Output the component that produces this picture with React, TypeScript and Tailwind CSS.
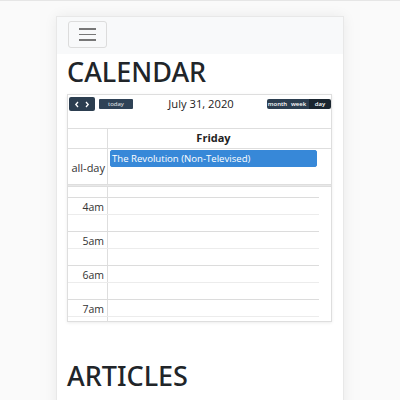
import React from 'react';

const font = { fontFamily: "'Open Sans', 'Noto Sans', sans-serif" };
const headingFont = { fontFamily: "'Noto Sans', 'Open Sans', sans-serif" };

// half-hour slots of the day view, starting just above 4am
const slots = [
  { label: '', major: false },
  { label: '4am', major: true },
  { label: '', major: false },
  { label: '5am', major: true },
  { label: '', major: false },
  { label: '6am', major: true },
  { label: '', major: false },
  { label: '7am', major: true },
  { label: '', major: false },
];

const ViewButton = ({ label, active }: { label: string; active?: boolean }) => (
  <div
    className={`h-full flex items-center justify-center text-[6px] font-semibold text-white leading-none ${
      active ? 'bg-[#1a252f] w-[22px]' : 'bg-[#2c3e50] w-[21px]'
    }`}
  >
    {label}
  </div>
);

const Toolbar = () => (
  <div className="flex items-center h-[14px] pl-[1px]">
    <div className="flex h-[14px] w-[26px] bg-[#2c3e50] rounded-[2px] items-center justify-around px-[3px]">
      <svg width="6" height="7" viewBox="0 0 6 7">
        <path d="M4 1 L1.8 3.5 L4 6" stroke="white" strokeWidth="1.3" fill="none" />
      </svg>
      <svg width="6" height="7" viewBox="0 0 6 7">
        <path d="M2 1 L4.2 3.5 L2 6" stroke="white" strokeWidth="1.3" fill="none" />
      </svg>
    </div>
    <div className="ml-[4px] h-[10px] w-[34px] bg-[#2f4256] rounded-[1px] flex items-center justify-center text-[6px] text-white/90 leading-none">
      today
    </div>
    <div className="flex-1 text-center text-[11.2px] text-[#222] leading-none pl-[2px]">July 31, 2020</div>
    <div className="flex h-[10px] rounded-[2px] overflow-hidden">
      <ViewButton label="month" />
      <ViewButton label="week" />
      <ViewButton label="day" active />
    </div>
  </div>
);

const Calendar = () => (
  <div className="border border-[#dedede] shadow-[0_1px_3px_rgba(0,0,0,0.08)] bg-white">
    <div className="pt-[2px]">
      <Toolbar />
    </div>
    <div className="mt-[17px] border-t border-[#dedede]">
      {/* header */}
      <div className="flex h-[20px] border-b border-[#dedede]">
        <div className="w-[40px] border-r border-[#dedede]" />
        <div className="flex-1 flex items-center justify-center text-[11px] font-bold text-[#222]">Friday</div>
        <div className="w-[12px]" />
      </div>
      {/* all-day row */}
      <div className="flex h-[35px]">
        <div className="w-[40px] border-r border-[#dedede] flex items-center justify-end pr-[2px] pt-[4px] text-[11px] text-[#333]">
          all-day
        </div>
        <div className="flex-1 pt-[1px] px-[2px]">
          <div className="h-[17px] bg-[#3788d8] border border-[#3788d8] rounded-[2px] text-white text-[9.6px] leading-[15px] px-[1px] whitespace-nowrap overflow-hidden">
            The Revolution (Non-Televised)
          </div>
        </div>
        <div className="w-[12px]" />
      </div>
      <div className="h-[3px] bg-[#e8e8e8] border-y border-[#dedede]" />
      {/* time grid */}
      <div className="h-[134px] overflow-hidden flex">
        <div className="flex-1 mt-[-6px]">
          {slots.map((s, i) => (
            <div key={i} className={`flex h-[17px] border-b ${i % 2 === 0 ? 'border-[#dcdcdc]' : 'border-[#ececec]'}`}>
              <div className="w-[40px] border-r border-[#dedede] flex items-center justify-end pr-[3px] pt-[3px] text-[10.5px] text-[#333]">
                {s.label}
              </div>
              <div className="flex-1" />
            </div>
          ))}
        </div>
        <div className="w-[12px] bg-white" />
      </div>
    </div>
  </div>
);

const App = () => (
  <div className="min-h-screen bg-[#fafafa] border-t border-[#e6e6e6] pt-[15px]" style={font}>
    <div className="w-[288px] mx-auto bg-white border border-[#e8e8e8] shadow-[0_0_12px_rgba(0,0,0,0.07)]">
      <nav className="bg-[#f8f9fa] h-[37px] pl-[11px] pt-[4px]">
        <button className="w-[39px] h-[27px] border border-[#dcdcdc] rounded-[3px] flex flex-col items-center justify-center gap-[4px]">
          <span className="block w-[17px] h-[1.5px] bg-[#777]" />
          <span className="block w-[17px] h-[1.5px] bg-[#777]" />
          <span className="block w-[17px] h-[1.5px] bg-[#777]" />
        </button>
      </nav>
      <div className="pl-[10px] pr-[11px]">
        <h1 className="text-[27px] font-medium text-[#212529] leading-[32px] mt-[2px] mb-[6px]" style={headingFont}>
          CALENDAR
        </h1>
        <Calendar />
        <h1 className="text-[27px] font-medium text-[#212529] leading-[32px] mt-[38px] mb-[9px]" style={headingFont}>
          ARTICLES
        </h1>
        <div className="border border-[#dedede] h-[40px] bg-white" />
      </div>
    </div>
  </div>
);

export default App;
